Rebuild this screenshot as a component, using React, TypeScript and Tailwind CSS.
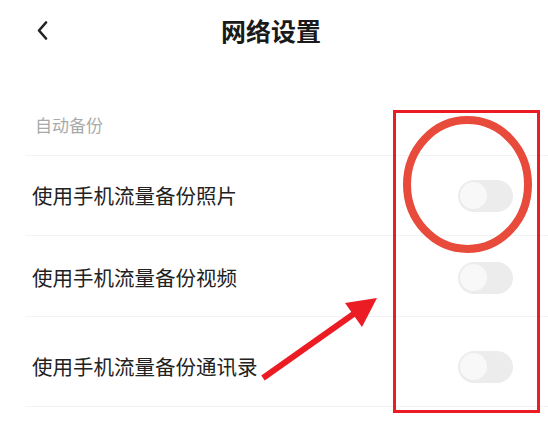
import React from "react";

const rows = [
  { label: "使用手机流量备份照片", h: "h-[80px] pt-0" },
  { label: "使用手机流量备份视频", h: "h-[81px] pt-[3px]" },
  { label: "使用手机流量备份通讯录", h: "h-[90px] pt-[10px]" },
];

function Toggle() {
  return (
    <div className="w-[55px] h-[32px] rounded-full bg-[#ececec] flex items-center px-[2px]">
      <div className="w-[27px] h-[27px] rounded-full bg-[#f8f8f8]" />
    </div>
  );
}

export default function App() {
  return (
    <div
      className="relative w-[548px] h-[437px] bg-white overflow-hidden"
      style={{ fontFamily: '"Noto Sans CJK SC", "Noto Sans", sans-serif' }}
    >
      {/* Header */}
      <div className="flex items-center h-[60px] pl-[37px]">
        <svg width="11" height="19" viewBox="0 0 11 19" className="shrink-0">
          <path d="M9 1.5L2 9.5l7 8" fill="none" stroke="#222" strokeWidth="2.6" strokeLinecap="round" strokeLinejoin="round" />
        </svg>
        <span className="ml-[173px] text-[25px] font-bold text-[#1a1a1a] leading-none">网络设置</span>
      </div>

      {/* Section */}
      <div className="mt-[56px] pl-[35px] text-[17px] leading-none text-[#a9a9a9]">自动备份</div>

      <div className="mt-[22px] ml-[25px] border-t border-[#f3f3f3]">
        {rows.map((r) => (
          <div key={r.label} className={`${r.h} flex items-center justify-between pl-[7px] pr-[35px] border-b border-[#f3f3f3]`}>
            <span className="text-[20.5px] leading-none text-[#222]">{r.label}</span>
            <Toggle />
          </div>
        ))}
      </div>

      {/* Annotation overlay */}
      <svg className="absolute inset-0 pointer-events-none" width="548" height="437" viewBox="0 0 548 437">
        <rect x="394.5" y="111.5" width="144" height="300" fill="none" stroke="#ec1c24" strokeWidth="3" />
        <ellipse cx="467.5" cy="184.5" rx="60.5" ry="64.5" fill="none" stroke="#e84a3b" strokeWidth="8" />
        <line x1="263" y1="378" x2="355" y2="313" stroke="#ec1c24" strokeWidth="6" />
        <polygon points="377,298 345,303 362,327" fill="#ec1c24" />
      </svg>
    </div>
  );
}
